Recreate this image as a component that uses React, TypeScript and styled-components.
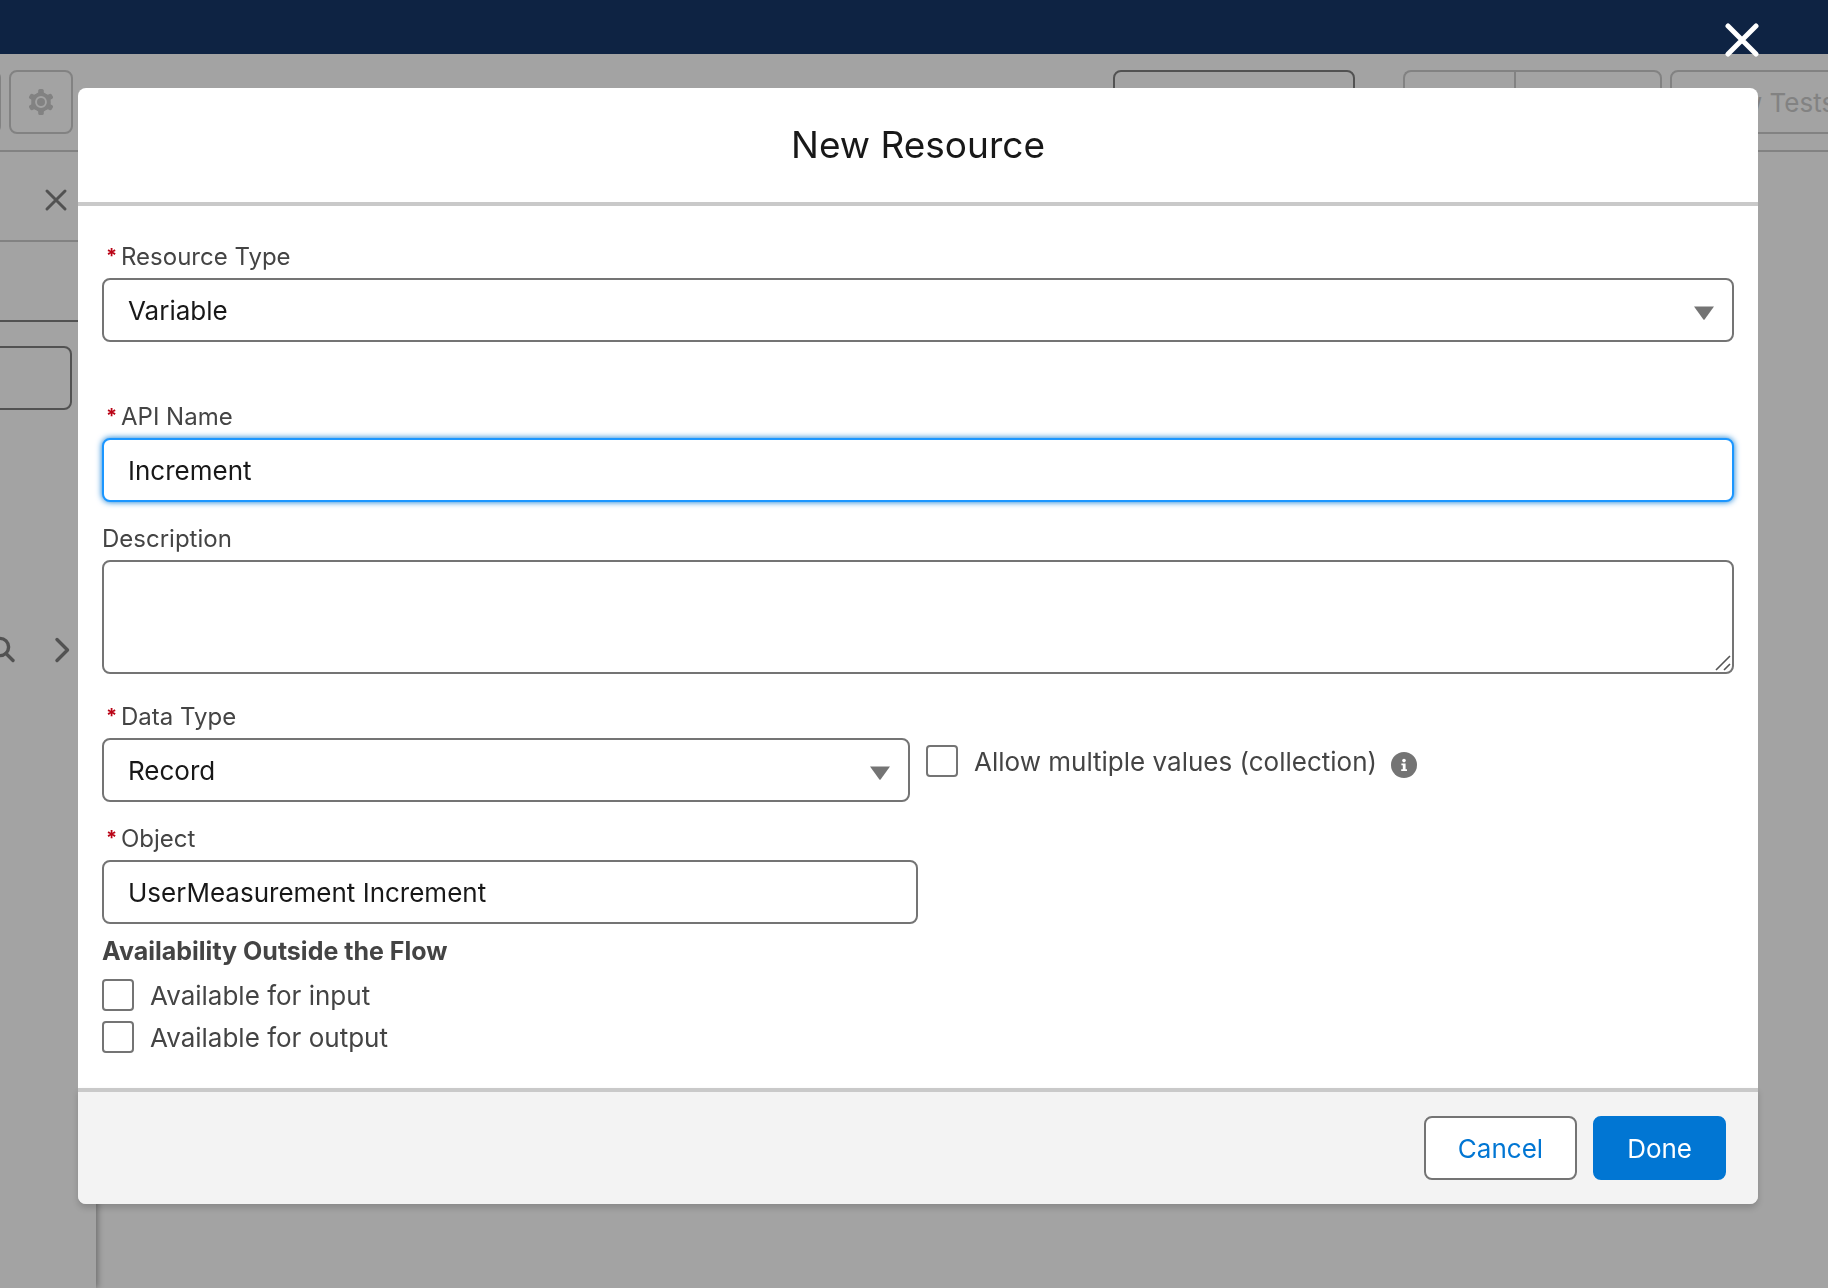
import React, { useState } from "react";
import styled, { createGlobalStyle, css } from "styled-components";

const GlobalStyle = createGlobalStyle`
  *, *::before, *::after { box-sizing: border-box; }
  html, body, #root { height: 100%; }
  body {
    margin: 0;
    overflow: hidden;
    background: #a3a3a3;
    color: #181818;
    font-family: Inter, "Liberation Sans", sans-serif;
    font-size: 26px;
  }
  button, input, select, textarea { font: inherit; color: inherit; }
`;

const line = "#828282";
const dark = "#525252";

/* ---------- builder page behind the dialog ---------- */

const Page = styled.div`
  display: flex;
  flex-direction: column;
  height: 100%;
  overflow: hidden;
`;

const NavBar = styled.header`
  flex: none;
  height: 54px;
  background: #0e2343;
`;

const Toolbar = styled.div`
  flex: none;
  display: flex;
  align-items: center;
  justify-content: space-between;
  height: 98px;
  border-bottom: 2px solid ${line};
  color: ${line};
`;

const ToolGroup = styled.div<{ $end?: boolean }>`
  display: flex;
  gap: 8px;
  flex: none;
  ${(p) => (p.$end ? "margin-right: -60px;" : "margin-left: -63px;")}
`;

const ToolButton = styled.button`
  display: flex;
  align-items: center;
  justify-content: center;
  width: 64px;
  height: 64px;
  padding: 0;
  border: 2px solid ${line};
  border-radius: 8px;
  background: none;
  white-space: nowrap;
`;

const TestsButton = styled(ToolButton)`
  padding: 0 30px;
  width: 218px;
  justify-content: flex-start;
`;

const Joined = styled.div`
  display: flex;
  ${ToolButton} {
    width: 148px;
  }
  ${ToolButton}:first-child {
    width: 111px;
    border-right: 0;
    border-radius: 8px 0 0 8px;
  }
  ${ToolButton}:last-child {
    border-radius: 0 8px 8px 0;
  }
`;

const SelectElements = styled(ToolButton)`
  width: 242px;
  margin-right: 40px;
  border-color: ${dark};
`;

const Workspace = styled.div`
  flex: 1;
  display: flex;
  min-height: 0;
  overflow: hidden;
`;

const Panel = styled.aside`
  flex: none;
  width: 96px;
  color: ${dark};
  box-shadow: 2px 0 6px rgba(0, 0, 0, 0.32);
`;

const PanelHead = styled.div`
  display: flex;
  align-items: center;
  justify-content: flex-end;
  height: 90px;
  padding: 8px 28px 0 0;
  border-bottom: 2px solid ${line};
`;

const PanelTabs = styled.div`
  height: 80px;
  border-bottom: 2px solid ${dark};
`;

const PanelSearch = styled.input`
  display: block;
  width: 100px;
  height: 64px;
  margin: 24px 0 0 -28px;
  border: 2px solid ${dark};
  border-radius: 8px;
  background: none;
`;

const PanelRow = styled.div`
  display: flex;
  align-items: center;
  justify-content: flex-end;
  gap: 36px;
  margin-top: 224px;
  padding-right: 24px;
  height: 32px;
  svg {
    flex: none;
  }
`;

const IconButton = styled.button`
  display: flex;
  padding: 0;
  border: 0;
  background: none;
`;

/* ---------- dialog ---------- */

const Overlay = styled.div`
  position: fixed;
  inset: 0;
  overflow: hidden;
  padding: 88px 70px 84px 78px;
`;

const Dialog = styled.section`
  position: relative;
  border-radius: 8px;
  background: #fff;
`;

const CloseButton = styled(IconButton)`
  position: absolute;
  right: -1px;
  bottom: calc(100% + 31px);
  color: #fff;
`;

const DialogHead = styled.header`
  padding: 32px;
  border-bottom: 4px solid #c9c9c9;
  text-align: center;
`;

const Title = styled.h2`
  margin: 0;
  font-size: 37px;
  font-weight: 400;
  line-height: 50px;
`;

const Body = styled.div`
  padding: 34px 24px 30px;
`;

const Field = styled.div<{ $gap?: number }>`
  margin-bottom: ${(p) => p.$gap ?? 0}px;
`;

const Label = styled.label`
  display: flex;
  margin-bottom: 4px;
  font-size: 24px;
  line-height: 34px;
  color: #444;
`;

const Required = styled.abbr`
  width: 19px;
  padding-left: 4px;
  color: #ba0517;
  font-size: 20px;
  font-weight: 700;
  line-height: 32px;
  text-decoration: none;
`;

const box = css`
  display: block;
  width: 100%;
  border: 2px solid #747474;
  border-radius: 8px;
  background: #fff;
  outline: none;
`;

const Input = styled.input<{ $active?: boolean }>`
  ${box}
  height: 64px;
  padding: 0 24px;
  ${(p) =>
    p.$active &&
    css`
      border-color: #1b96ff;
      box-shadow: 0 0 6px #0176d3;
    `}
`;

const Control = styled.div`
  position: relative;
`;

const Select = styled.select`
  ${box}
  height: 64px;
  padding: 0 56px 0 24px;
  appearance: none;
`;

const Arrow = styled.svg`
  position: absolute;
  right: 20px;
  top: 28px;
  pointer-events: none;
`;

const TextArea = styled.textarea`
  ${box}
  height: 114px;
  padding: 12px 24px;
  resize: none;
`;

const Grip = styled.svg`
  position: absolute;
  right: 3px;
  bottom: 3px;
  pointer-events: none;
`;

const Columns = styled.div`
  display: grid;
  grid-template-columns: 1fr 1fr;
  column-gap: 16px;
  margin-bottom: 20px;
`;

const Half = styled.div`
  width: 50%;
  margin-bottom: 10px;
`;

const CollectionOption = styled.div`
  display: flex;
  align-items: flex-start;
  gap: 14px;
  padding-top: 40px;
`;

const InfoButton = styled(IconButton)`
  padding: 12px 0 4px;
`;

const CheckLabel = styled.label`
  display: flex;
  align-items: center;
  gap: 16px;
  height: 42px;
  color: #444;
`;

const Check = styled.input`
  appearance: none;
  flex: none;
  width: 32px;
  height: 32px;
  margin: 0;
  border: 2px solid #747474;
  border-radius: 4px;
  background: #fff;
  &:checked {
    background: #0176d3;
  }
`;

const Group = styled.fieldset`
  margin: 0;
  padding: 0;
  border: 0;
`;

const Legend = styled.legend`
  padding: 0;
  margin-bottom: 6px;
  font-size: 25px;
  font-weight: 700;
  line-height: 34px;
  color: #444;
`;

const Foot = styled.footer`
  display: flex;
  justify-content: flex-end;
  gap: 16px;
  padding: 24px 32px;
  border-top: 4px solid #c9c9c9;
  border-radius: 0 0 8px 8px;
  background: #f3f3f3;
  box-shadow: 0 4px 6px rgba(0, 0, 0, 0.16);
`;

const Button = styled.button<{ $brand?: boolean }>`
  height: 64px;
  padding: 0 32px;
  border: 2px solid ${(p) => (p.$brand ? "#0176d3" : "#747474")};
  border-radius: 8px;
  background: ${(p) => (p.$brand ? "#0176d3" : "#fff")};
  color: ${(p) => (p.$brand ? "#fff" : "#0176d3")};
`;

const CloseIcon = ({ size, weight }: { size: number; weight: number }) => (
  <svg width={size} height={size} viewBox={`0 0 ${size} ${size}`} fill="none" stroke="currentColor" strokeWidth={weight} strokeLinecap="round" aria-hidden>
    <path d={`M3 3L${size - 3} ${size - 3}M${size - 3} 3L3 ${size - 3}`} />
  </svg>
);

const GearIcon = () => {
  const teeth = [0, 60, 120, 180, 240, 300];
  return (
    <svg width="28" height="28" viewBox="-14 -14 28 28" aria-hidden>
      <g fill={line}>
        {teeth.map((a) => (
          <path key={a} transform={`rotate(${a})`} d="M-5.6 -7L-2.8 -9.6V-11.4Q-2.6 -13 -1.2 -13H1.2Q2.6 -13 2.8 -11.4V-9.6L5.6 -7Z" />
        ))}
      </g>
      <circle r="7.8" fill="none" stroke={line} strokeWidth="3.8" />
      <circle r="4" fill={line} />
    </svg>
  );
};

const DownArrow = () => (
  <Arrow width="20" height="14" viewBox="0 0 20 14" aria-hidden>
    <path d="M0 .6H20L10.6 13.4Q10 14 9.4 13.4Z" fill="#747474" />
  </Arrow>
);

const Star = () => <Required title="required">*</Required>;

export default function App() {
  const [name, setName] = useState("Increment");
  const [object, setObject] = useState("UserMeasurement Increment");

  return (
    <>
      <GlobalStyle />
      <Page>
        <NavBar />
        <Toolbar>
          <ToolGroup>
            <ToolButton aria-label="Toggle toolbox" />
            <ToolButton aria-label="Settings">
              <GearIcon />
            </ToolButton>
          </ToolGroup>
          <ToolGroup $end>
            <SelectElements aria-label="Select elements" />
            <Joined>
              <ToolButton aria-label="Run" />
              <ToolButton aria-label="Debug" />
            </Joined>
            <TestsButton>View Tests</TestsButton>
          </ToolGroup>
        </Toolbar>
        <Workspace>
          <Panel>
            <PanelHead>
              <IconButton aria-label="Close panel">
                <CloseIcon size={24} weight={3} />
              </IconButton>
            </PanelHead>
            <PanelTabs />
            <PanelSearch aria-label="Search this flow" />
            <PanelRow>
              <svg width="32" height="28" viewBox="0 0 32 28" fill="none" stroke={dark} strokeWidth="3.4" strokeLinecap="round" aria-hidden>
                <circle cx="16" cy="11" r="8.6" />
                <path d="M22 17.5L29 24.5" />
              </svg>
              <IconButton aria-label="Open details">
                <svg width="20" height="28" viewBox="0 0 20 28" fill="none" stroke={dark} strokeWidth="3.4" strokeLinecap="round" strokeLinejoin="round" aria-hidden>
                  <path d="M5 3.5L15.5 14L5 24.5" />
                </svg>
              </IconButton>
            </PanelRow>
          </Panel>
        </Workspace>
      </Page>

      <Overlay>
        <Dialog role="dialog" aria-labelledby="dialog-title">
          <CloseButton aria-label="Close">
            <CloseIcon size={34} weight={5} />
          </CloseButton>
          <DialogHead>
            <Title id="dialog-title">New Resource</Title>
          </DialogHead>

          <Body>
            <Field $gap={58}>
              <Label htmlFor="resource-type">
                <Star />
                Resource Type
              </Label>
              <Control>
                <Select id="resource-type">
                  <option>Variable</option>
                </Select>
                <DownArrow />
              </Control>
            </Field>

            <Field $gap={20}>
              <Label htmlFor="api-name">
                <Star />
                API Name
              </Label>
              <Input id="api-name" $active value={name} onChange={(e) => setName(e.target.value)} />
            </Field>

            <Field $gap={26}>
              <Label htmlFor="description">Description</Label>
              <Control>
                <TextArea id="description" />
                <Grip width="16" height="16" viewBox="0 0 16 16" stroke="#555" strokeWidth="1.6" aria-hidden>
                  <path d="M1 15L15 1M9 15L15 9" />
                </Grip>
              </Control>
            </Field>

            <Columns>
              <Field>
                <Label htmlFor="data-type">
                  <Star />
                  Data Type
                </Label>
                <Control>
                  <Select id="data-type">
                    <option>Record</option>
                  </Select>
                  <DownArrow />
                </Control>
              </Field>
              <CollectionOption>
                <CheckLabel>
                  <Check type="checkbox" />
                  Allow multiple values (collection)
                </CheckLabel>
                <InfoButton aria-label="Help">
                  <svg width="26" height="26" viewBox="0 0 26 26" aria-hidden>
                    <circle cx="13" cy="13" r="13" fill="#747474" />
                    <circle cx="13" cy="8.6" r="1.8" fill="#fff" />
                    <path d="M10.4 11.6H14.6V17.2H16V19H10.2V17.2H11.8V13.2H10.4Z" fill="#fff" />
                  </svg>
                </InfoButton>
              </CollectionOption>
            </Columns>

            <Half>
              <Label htmlFor="object">
                <Star />
                Object
              </Label>
              <Input id="object" value={object} onChange={(e) => setObject(e.target.value)} />
            </Half>

            <Group>
              <Legend>Availability Outside the Flow</Legend>
              <CheckLabel>
                <Check type="checkbox" />
                Available for input
              </CheckLabel>
              <CheckLabel>
                <Check type="checkbox" />
                Available for output
              </CheckLabel>
            </Group>
          </Body>

          <Foot>
            <Button>Cancel</Button>
            <Button $brand>Done</Button>
          </Foot>
        </Dialog>
      </Overlay>
    </>
  );
}
